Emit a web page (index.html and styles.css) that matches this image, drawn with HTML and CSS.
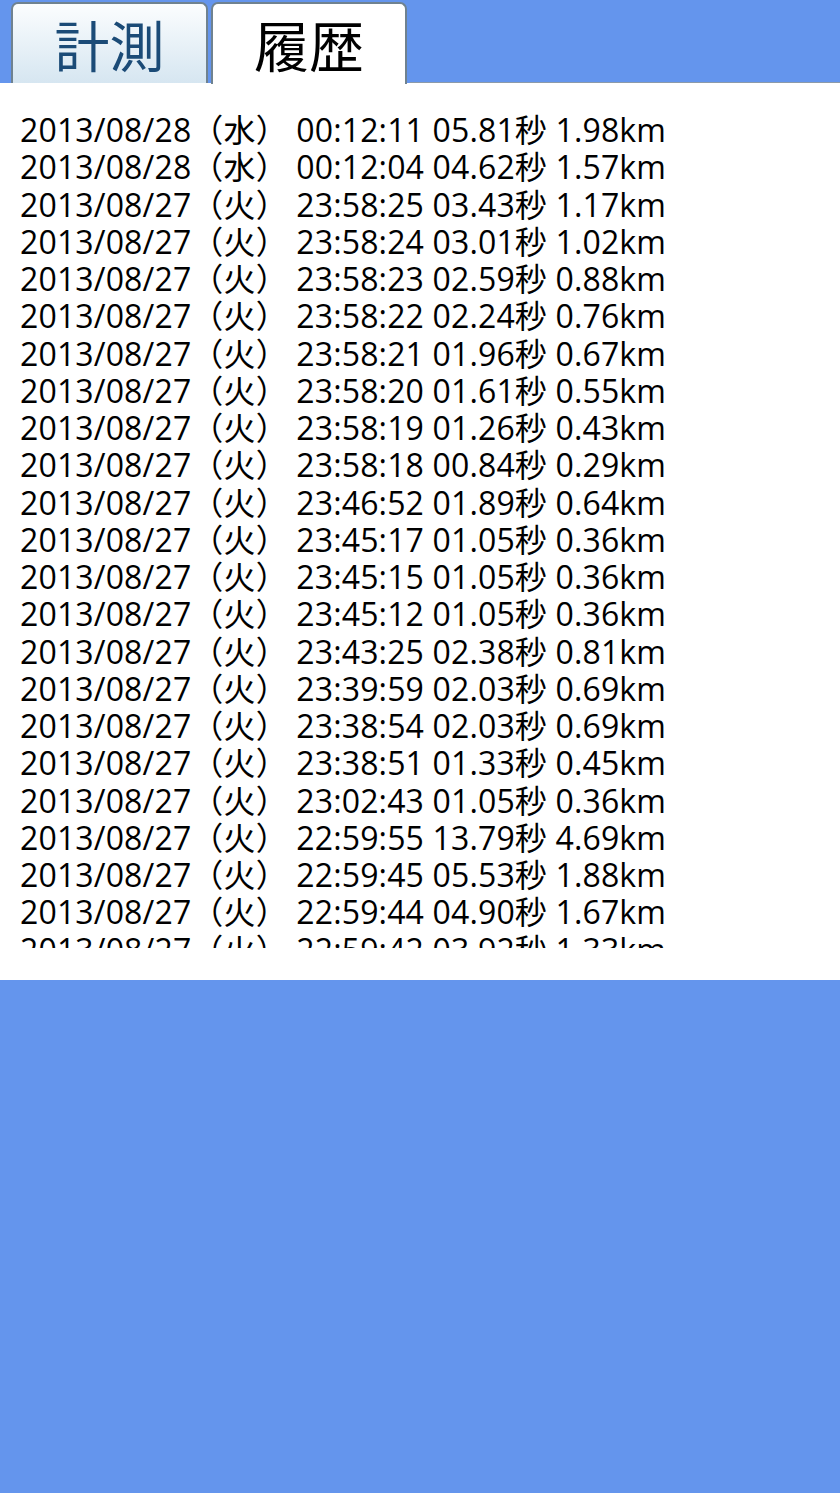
FILE: index.html
```html
<!DOCTYPE html>
<html>
<head>
  <meta charset="utf-8">
  <title>履歴</title>
  <link rel="stylesheet" href="styles.css">
</head>
<body>
  <div class='tabs'>
    <div class='tab'>計測</div>
    <div class='tab active'>履歴</div>
    <div class='tabline'></div>
  </div>
  <div class='panel'>
    <div class='list'>
      <div class='row'>2013/08/28（水） 00:12:11 05.81秒 1.98km</div>
      <div class='row'>2013/08/28（水） 00:12:04 04.62秒 1.57km</div>
      <div class='row'>2013/08/27（火） 23:58:25 03.43秒 1.17km</div>
      <div class='row'>2013/08/27（火） 23:58:24 03.01秒 1.02km</div>
      <div class='row'>2013/08/27（火） 23:58:23 02.59秒 0.88km</div>
      <div class='row'>2013/08/27（火） 23:58:22 02.24秒 0.76km</div>
      <div class='row'>2013/08/27（火） 23:58:21 01.96秒 0.67km</div>
      <div class='row'>2013/08/27（火） 23:58:20 01.61秒 0.55km</div>
      <div class='row'>2013/08/27（火） 23:58:19 01.26秒 0.43km</div>
      <div class='row'>2013/08/27（火） 23:58:18 00.84秒 0.29km</div>
      <div class='row'>2013/08/27（火） 23:46:52 01.89秒 0.64km</div>
      <div class='row'>2013/08/27（火） 23:45:17 01.05秒 0.36km</div>
      <div class='row'>2013/08/27（火） 23:45:15 01.05秒 0.36km</div>
      <div class='row'>2013/08/27（火） 23:45:12 01.05秒 0.36km</div>
      <div class='row'>2013/08/27（火） 23:43:25 02.38秒 0.81km</div>
      <div class='row'>2013/08/27（火） 23:39:59 02.03秒 0.69km</div>
      <div class='row'>2013/08/27（火） 23:38:54 02.03秒 0.69km</div>
      <div class='row'>2013/08/27（火） 23:38:51 01.33秒 0.45km</div>
      <div class='row'>2013/08/27（火） 23:02:43 01.05秒 0.36km</div>
      <div class='row'>2013/08/27（火） 22:59:55 13.79秒 4.69km</div>
      <div class='row'>2013/08/27（火） 22:59:45 05.53秒 1.88km</div>
      <div class='row'>2013/08/27（火） 22:59:44 04.90秒 1.67km</div>
      <div class='row'>2013/08/27（火） 22:59:42 03.92秒 1.33km</div>
    </div>
  </div>
</body>
</html>
```

FILE: styles.css
```css
body, html {
  margin: 0;
  padding: 0;
  width: 100%;
  height: 100%;
  background: #6495ed;
}
.tabs {
  display: flex;
  align-items: flex-end;
  height: 83px;
  padding: 0 0 0 11px;
  box-sizing: border-box;
}
.tab {
  width: 193px;
  height: 79px;
  margin-right: 3px;
  border: 2px solid #6f8290;
  border-bottom: none;
  border-radius: 7px 7px 0 0;
  background: linear-gradient(#fbfdfe, #d6e6f1);
  color: #1b4b77;
  font-family: "Noto Sans CJK JP", sans-serif;
  font-size: 55px;
  line-height: 79px;
  text-align: center;
}
.tab.active {
  width: 192px;
  height: 80px;
  margin-bottom: -1px;
  background: #fff;
  color: #000;
}
.tabline {
  flex: 1;
  align-self: flex-end;
  height: 1px;
  background: #8c9aa8;
}
.panel {
  background: #fff;
  height: 897px;
  padding: 28px 0 0 20px;
  box-sizing: border-box;
}
.list {
  height: 837px;
  overflow: hidden;
  font-family: "Open Sans", "Noto Sans CJK JP", sans-serif;
  font-size: 32px;
  line-height: 37.25px;
  letter-spacing: 0.15px;
  color: #000;
}
.row {
  white-space: nowrap;
}
```
